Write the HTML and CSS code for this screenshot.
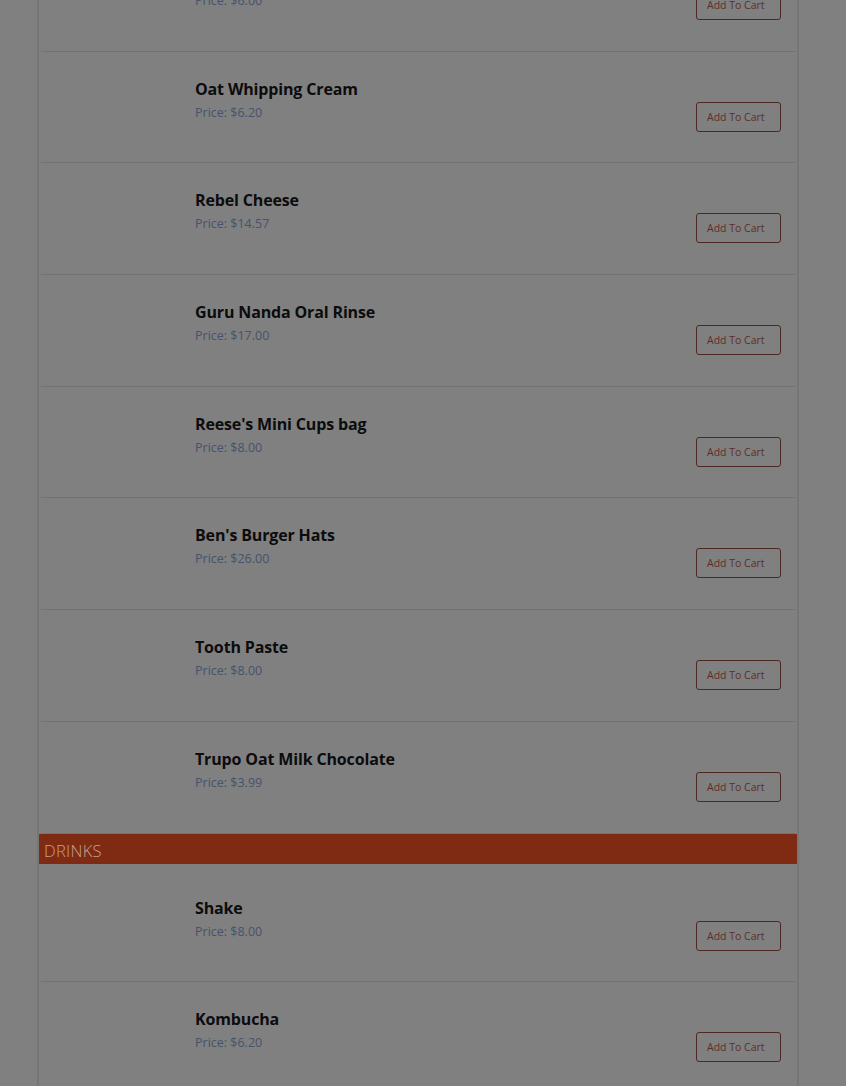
FILE: index.html
```html
<!DOCTYPE html>
<html lang="en">
<head>
<meta charset="utf-8">
<title>Menu</title>
<link rel="stylesheet" href="styles.css">
</head>
<body>
<main class="menu">
  <section class="section">
    <div class="list">
      <div class="item"><div class="info"><div class="name">Oat Milk</div><div class="price">Price: $6.00</div></div><button class="cart">Add To Cart</button></div>
      <div class="item"><div class="info"><div class="name">Oat Whipping Cream</div><div class="price">Price: $6.20</div></div><button class="cart">Add To Cart</button></div>
      <div class="item"><div class="info"><div class="name">Rebel Cheese</div><div class="price">Price: $14.57</div></div><button class="cart">Add To Cart</button></div>
      <div class="item"><div class="info"><div class="name">Guru Nanda Oral Rinse</div><div class="price">Price: $17.00</div></div><button class="cart">Add To Cart</button></div>
      <div class="item"><div class="info"><div class="name">Reese's Mini Cups bag</div><div class="price">Price: $8.00</div></div><button class="cart">Add To Cart</button></div>
      <div class="item"><div class="info"><div class="name">Ben's Burger Hats</div><div class="price">Price: $26.00</div></div><button class="cart">Add To Cart</button></div>
      <div class="item"><div class="info"><div class="name">Tooth Paste</div><div class="price">Price: $8.00</div></div><button class="cart">Add To Cart</button></div>
      <div class="item"><div class="info"><div class="name">Trupo Oat Milk Chocolate</div><div class="price">Price: $3.99</div></div><button class="cart">Add To Cart</button></div>
    </div>
  </section>
  <section class="section">
    <h2 class="section-title">DRINKS</h2>
    <div class="list list-padded">
      <div class="item"><div class="info"><div class="name">Shake</div><div class="price">Price: $8.00</div></div><button class="cart">Add To Cart</button></div>
      <div class="item"><div class="info"><div class="name">Kombucha</div><div class="price">Price: $6.20</div></div><button class="cart">Add To Cart</button></div>
    </div>
  </section>
</main>
</body>
</html>
```
FILE: styles.css
```css
html, body {
  margin: 0;
  padding: 0;
  background: #808080;
  overflow: hidden;
  height: 100%;
}

body {
  font-family: "Open Sans", "Noto Sans", sans-serif;
}

.menu {
  width: 758px;
  margin: -60px 0 0 37px;
  border-left: 2px solid #767676;
  border-right: 2px solid #767676;
}

.section-title {
  margin: 0;
  height: 30px;
  line-height: 33px;
  background: #7f2b13;
  color: #c6a093;
  font-weight: 300;
  font-size: 16.5px;
  letter-spacing: 0.3px;
  padding-left: 5px;
}

.list-padded {
  padding-top: 7px;
}

.item {
  display: flex;
  justify-content: space-between;
  align-items: flex-start;
  height: 110.7px;
  box-sizing: content-box;
  margin: 0 2px;
  padding: 0 14px 0 154px;
  border-bottom: 1px solid #727272;
}

.info {
  padding-top: 26px;
}

.name {
  font-size: 16px;
  line-height: 22px;
  font-weight: 700;
  letter-spacing: -0.15px;
  color: #0c0c0c;
}

.price {
  margin-top: 4px;
  font-size: 12.5px;
  line-height: 18px;
  color: #46536a;
}

.cart {
  margin-top: 50px;
  width: 85px;
  height: 30px;
  box-sizing: border-box;
  padding: 0 0 0 10px;
  text-align: left;
  background: transparent;
  border: 1px solid #4e2822;
  border-radius: 3px;
  color: #5f2d28;
  font-family: "Open Sans", "Noto Sans", sans-serif;
  font-size: 10.5px;
  line-height: 28px;
}
```
